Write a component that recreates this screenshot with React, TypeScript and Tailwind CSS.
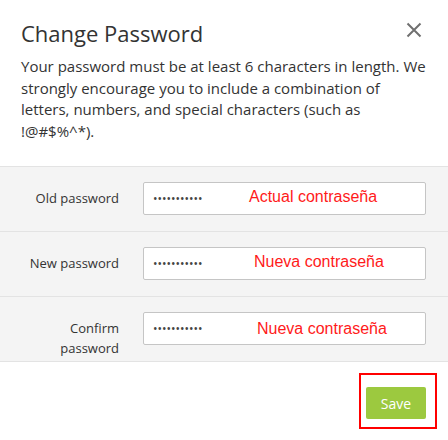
import { useState } from 'react';

const fields = [
    { label: 'Old password', hint: 'Actual contraseña', hintClass: 'left-[106px] top-[5px]' },
    { label: 'New password', hint: 'Nueva contraseña', hintClass: 'left-[111px] top-[5px]' },
    { label: 'Confirm password', hint: 'Nueva contraseña', hintClass: 'left-[114px] top-[7px]' },
];

export default function App() {
    const [values, setValues] = useState(['oldpassword', 'newpassword', 'newpassword']);

    return (
        <div className="w-[448px] h-[440px] bg-white text-[#333] font-['Open_Sans',sans-serif] overflow-hidden">
            <div className="flex items-start justify-between pl-[21px] pr-[26px] pt-[18px]">
                <h2 className="text-[22px] leading-[30px] text-[#333]">Change Password</h2>
                <button className="mt-[4px] text-[#707070]" title="Close">
                    <svg width="16" height="16" viewBox="0 0 16 16" fill="none" stroke="currentColor" strokeWidth="2">
                        <path d="M1.5 1.5 L14.5 14.5 M14.5 1.5 L1.5 14.5" />
                    </svg>
                </button>
            </div>
            <p className="pl-[21px] pr-[20px] mt-[8px] text-[15px] leading-[21.5px] text-[#333]">
                Your password must be at least 6 characters in length. We strongly encourage you to include a combination of letters, numbers, and special characters (such as !@#$%^*).
            </p>

            <div className="mt-[24px] bg-[#f4f4f4] border-t border-[#e3e3e3]">
                {fields.map((f, i) => (
                    <div key={f.label} className="h-[65px] border-b border-[#e3e3e3] flex items-start pt-[15px]">
                        <label className="w-[143px] pl-[21px] pr-[24px] pt-[6px] text-right text-[13px] leading-[20px] text-[#333]">
                            {f.label}
                        </label>
                        <div className="relative w-[283px] h-[33px]">
                            <input
                                type="password"
                                value={values[i]}
                                onChange={(e) => setValues(values.map((v, j) => (j === i ? e.target.value : v)))}
                                className="w-full h-full bg-white border border-[#c5c5c5] rounded-[2px] pl-[9px] text-[12px] text-[#444] outline-none"
                            />
                            <span className={`absolute ${f.hintClass} text-[16px] leading-[20px] text-[#ff1a1a] font-['Liberation_Sans',Arial,sans-serif] pointer-events-none`}>
                                {f.hint}
                            </span>
                        </div>
                    </div>
                ))}
            </div>

            <div className="flex justify-end pr-[11px] pt-[11px]">
                <div className="border-2 border-[#ff0000] pl-[5px] pr-[9px] pt-[12px] pb-[8px]">
                    <button className="w-[60px] h-[32px] rounded-[2px] bg-[#9cc93f] text-white text-[14px]">Save</button>
                </div>
            </div>
        </div>
    );
}
